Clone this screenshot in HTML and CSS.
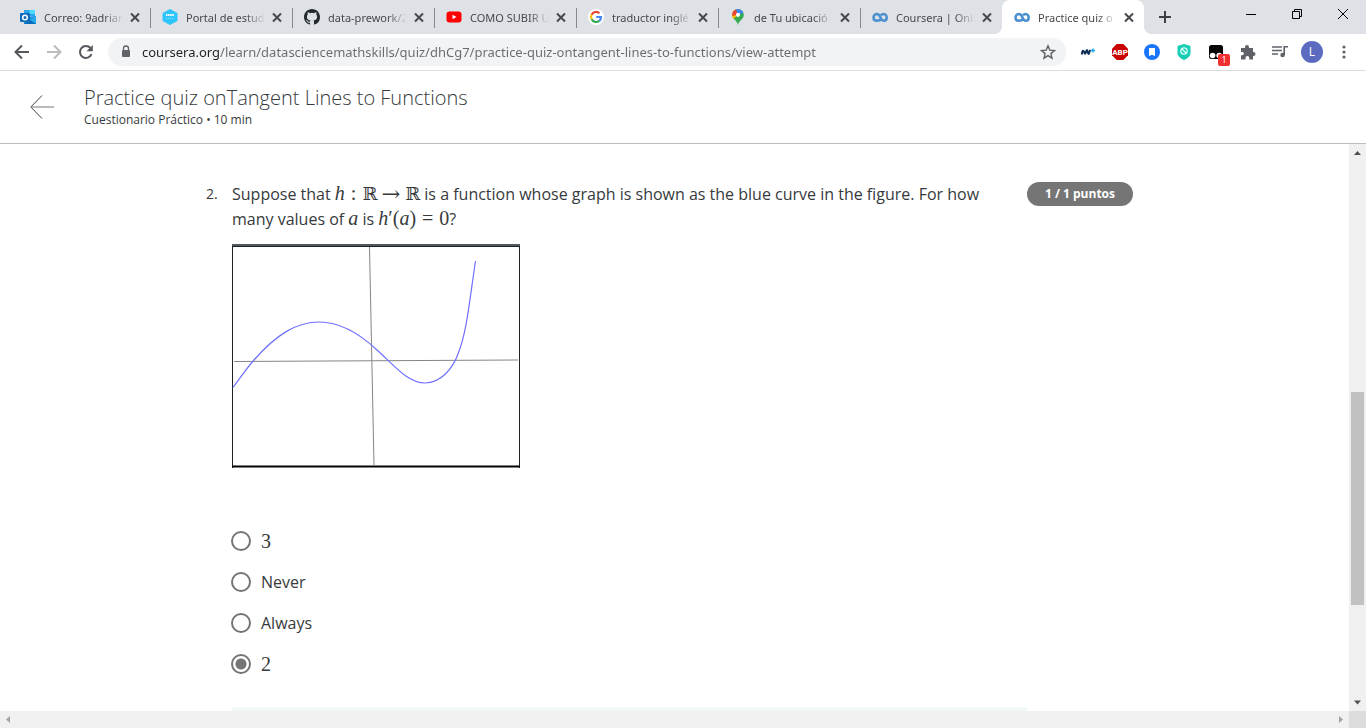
FILE: index.html
```html
<!DOCTYPE html>
<html lang="es">
<head>
<meta charset="utf-8">
<title>Practice quiz onTangent Lines to Functions</title>
<link rel="stylesheet" href="styles.css">
</head>
<body>
<svg class="defs" aria-hidden="true">
  <symbol id="close" viewBox="0 0 16 16"><path d="M4 4.500 12 12.500M12 4.500 4 12.500" stroke="#45484c" stroke-width="2"/></symbol>
  <symbol id="coursera" viewBox="0 0 16 16"><path d="M9.300 9.800C8.400 11.200 7.300 11.800 5 11.800 2.500 11.800 1.500 10 1.500 8.400S2.800 5 5.200 5C8.600 5 8.200 11.800 11.800 11.800 13.800 11.800 14.700 10 14.700 8.400S13.600 5 11.500 5C10.300 5 9.500 5.600 9 6.400" fill="none" stroke="#4a90d0" stroke-width="2.500"/></symbol>
</svg>

<header class="tabstrip">
  <nav class="tabs" aria-label="Tabs">
    <div class="tab">
      <svg class="favicon" viewBox="0 0 16 16"><path d="M4 1h11v6H4z" fill="#28a8ea"/><path d="M9.500 1H15v4H9.500z" fill="#50d9ff"/><path d="M4 5h6v5H4z" fill="#0364b8"/><path d="M4 8l12-1v8H4z" fill="#1490df"/><path d="M16 7v8L9 11z" fill="#28a8ea"/><path d="M4 15l6-4 6 4z" fill="#0a6cbd"/><rect y="4" width="10" height="9" rx="1" fill="#0f6cbd"/><circle cx="5" cy="8.500" r="2.300" fill="none" stroke="#fff" stroke-width="1.500"/></svg>
      <span class="title">Correo: 9adriar</span><button class="close" aria-label="Cerrar"><svg><use href="#close"/></svg></button>
    </div>
    <div class="tab">
      <svg class="favicon" viewBox="0 0 16 16"><path d="M8 .500 15 4.300v7.400L8 15.500 1 11.700V4.300z" fill="#2dc5fa" stroke="#2dc5fa" stroke-linejoin="round"/><path d="M4 6h8" stroke="#fff" stroke-width="2" stroke-dasharray="1.500 .6"/><path d="M4 9.500h8" stroke="#8ce2ff" stroke-dasharray="1 1"/></svg>
      <span class="title">Portal de estud</span><button class="close" aria-label="Cerrar"><svg><use href="#close"/></svg></button>
    </div>
    <div class="tab">
      <svg class="favicon" viewBox="0 0 16 16"><path fill="#24292e" d="M8 0C3.580 0 0 3.580 0 8c0 3.540 2.290 6.530 5.470 7.590.4.070.55-.17.55-.38 0-.19-.010-.82-.010-1.490-2.010.37-2.530-.49-2.690-.94-.09-.23-.48-.94-.82-1.130-.28-.15-.68-.52-.010-.53.63-.010 1.080.58 1.230.82.72 1.210 1.870.87 2.330.66.070-.52.28-.87.510-1.070-1.780-.2-3.640-.89-3.640-3.950 0-.87.310-1.590.82-2.150-.08-.2-.36-1.020.08-2.120 0 0 .67-.21 2.200.82a7.600 7.600 0 0 1 4 0c1.530-1.040 2.200-.82 2.200-.82.44 1.100.16 1.920.08 2.120.51.56.82 1.270.82 2.150 0 3.070-1.870 3.750-3.650 3.950.29.25.54.73.54 1.480 0 1.070-.010 1.930-.010 2.200 0 .21.15.46.55.38A8 8 0 0 0 16 8c0-4.420-3.580-8-8-8z"/></svg>
      <span class="title">data-prework/2</span><button class="close" aria-label="Cerrar"><svg><use href="#close"/></svg></button>
    </div>
    <div class="tab">
      <svg class="favicon" viewBox="0 0 16 16"><rect x=".5" y="2.500" width="15" height="11" rx="3" fill="#f00"/><path d="M6.500 5.700v4.600L10.500 8z" fill="#fff"/></svg>
      <span class="title">COMO SUBIR U</span><button class="close" aria-label="Cerrar"><svg><use href="#close"/></svg></button>
    </div>
    <div class="tab">
      <svg class="favicon" viewBox="0 0 16 16"><circle cx="8" cy="8" r="8" fill="#fff"/><g fill="none" stroke-width="2.200"><path d="M11.500 4.300A5 5 0 0 0 3.600 5.700" stroke="#ea4335"/><path d="M3.600 5.700a5 5 0 0 0 0 4.600" stroke="#fbbc05"/><path d="M3.600 10.300a5 5 0 0 0 7.700 1.500" stroke="#34a853"/><path d="M11.300 11.800A5 5 0 0 0 13 8H8.200" stroke="#4285f4"/></g></svg>
      <span class="title">traductor inglé</span><button class="close" aria-label="Cerrar"><svg><use href="#close"/></svg></button>
    </div>
    <div class="tab">
      <svg class="favicon" viewBox="0 0 16 16"><path d="M8 0a5.800 5.800 0 0 0-5.800 5.800C2.200 10.500 7 11 8 16c1-5 5.800-5.500 5.800-10.200A5.800 5.800 0 0 0 8 0z" fill="#34a853"/><path d="M8 5.800 3.500 10A6 6 0 0 1 3.700 2z" fill="#fbbc04"/><path d="M8 5.800 2.400 7A5.800 5.800 0 0 1 6 .4z" fill="#ea4335"/><path d="M6 .4A5.800 5.800 0 0 1 13.400 4L8 6z" fill="#4285f4"/><circle cx="8" cy="5.800" r="2.100" fill="#fff"/></svg>
      <span class="title">de Tu ubicació</span><button class="close" aria-label="Cerrar"><svg><use href="#close"/></svg></button>
    </div>
    <div class="tab">
      <svg class="favicon"><use href="#coursera"/></svg>
      <span class="title">Coursera | Onli</span><button class="close" aria-label="Cerrar"><svg><use href="#close"/></svg></button>
    </div>
    <div class="tab active">
      <svg class="favicon"><use href="#coursera"/></svg>
      <span class="title">Practice quiz o</span><button class="close" aria-label="Cerrar"><svg><use href="#close"/></svg></button>
    </div>
  </nav>
  <button class="newtab" aria-label="Nueva pestaña"><svg width="12" height="12" viewBox="0 0 12 12"><path d="M6 0v12M0 6h12" stroke="#3c4043" stroke-width="2"/></svg></button>
  <div class="window">
    <button aria-label="Minimizar"><svg width="12" height="12"><path d="M1 6.500h10" stroke="#000"/></svg></button>
    <button aria-label="Restaurar"><svg width="12" height="12" fill="none" stroke="#000"><path d="M1.500 3.500h7v7h-7zM3.500 3.500v-2h7v7h-2"/></svg></button>
    <button aria-label="Cerrar ventana"><svg width="12" height="12"><path d="M1 1l10 10M11 1 1 11" stroke="#000"/></svg></button>
  </div>
</header>

<div class="toolbar">
  <button aria-label="Atrás"><svg width="16" height="16" fill="none" stroke="#55585c" stroke-width="2"><path d="M15 8H2M8 1.500 1.500 8 8 14.500"/></svg></button>
  <button aria-label="Adelante"><svg width="16" height="16" fill="none" stroke="#babcbe" stroke-width="2"><path d="M1 8h13M8 1.500 14.500 8 8 14.500"/></svg></button>
  <button aria-label="Recargar"><svg width="16" height="16"><path d="M13.500 10.200A6 6 0 1 1 12.500 4" fill="none" stroke="#55585c" stroke-width="2"/><path d="M14.800 1v6.300H8.500z" fill="#55585c"/></svg></button>
  <div class="omnibox">
    <svg width="10" height="14"><path d="M2.500 6V3.500a2.500 2.500 0 0 1 5 0V6" fill="none" stroke="#5f6368" stroke-width="1.300"/><rect x="1" y="5" width="8" height="7" rx="1" fill="#5f6368"/></svg>
    <input class="url" type="text" aria-label="Dirección" value="coursera.org/learn/datasciencemathskills/quiz/dhCg7/practice-quiz-ontangent-lines-to-functions/view-attempt">
    <button aria-label="Favorito"><svg width="16" height="16"><path d="M8 1.800l1.800 4.300 4.700.4-3.600 3.100 1.100 4.600-4-2.500-4 2.500 1.100-4.600L1.500 6.500l4.700-.4z" fill="none" stroke="#5f6368" stroke-width="1.400"/></svg></button>
  </div>
  <div class="extensions">
    <button aria-label="Movistar"><svg width="16" height="16"><path d="M2 10.500c0-4 1.200-5 2.500-1.500 1 2.500 1.500-3 2.500-3s.5 4 1.500 4S9 7 10.500 6" fill="none" stroke="#0b2d55" stroke-width="2"/><path d="M13 4.500v4M11 6.500h4" stroke="#12a6e0" stroke-width="1.300"/></svg></button>
    <button aria-label="AdBlock"><svg width="16" height="16"><path d="M4.700 0h6.600L16 4.700v6.600L11.300 16H4.700L0 11.300V4.700z" fill="#c70000"/><text class="abp" x="8" y="11" text-anchor="middle">ABP</text></svg></button>
    <button aria-label="Marcador"><svg width="16" height="16"><circle cx="8" cy="8" r="8" fill="#1a75fa"/><path d="M5 4h6v8L8 10.800 5 12z" fill="#fff"/></svg></button>
    <button aria-label="Protección"><svg width="16" height="16"><path d="M8 0l6.500 2v7c0 3-3 5.500-6.500 7C4.500 14.500 1.500 12 1.500 9V2z" fill="#18cdb4"/><circle cx="8" cy="7" r="3.200" fill="none" stroke="#d8fff8" stroke-width="1.300"/><path d="M5.800 4.800l4.400 4.400" stroke="#d8fff8" stroke-width="1.300"/></svg></button>
    <button class="badged" aria-label="Tampermonkey"><svg width="16" height="16"><rect x="1" y="1" width="14" height="14" rx="2.500" fill="#050505"/><circle cx="4.600" cy="11.500" r="2.800" fill="#fff"/><circle cx="11.200" cy="11.500" r="2.800" fill="#fff"/></svg><span class="badge">1</span></button>
    <button aria-label="Extensiones"><svg width="16" height="16"><path d="M1 4h4V3a2 2 0 0 1 4 0v1h4v4h.5a2 2 0 0 1 0 4H13v3.500H9.300V14a1.900 1.900 0 0 0-3.800 0v1.500H1v-4.200h1.200a1.700 1.700 0 0 0 0-3.400H1z" fill="#5f6368"/></svg></button>
    <button aria-label="Medios"><svg width="16" height="16"><path d="M0 3h10M0 6.500h10M0 10h6" stroke="#5f6368" stroke-width="1.600"/><path d="M12.200 11V2.800H16" fill="none" stroke="#5f6368" stroke-width="1.600"/><circle cx="10.600" cy="11" r="2.300" fill="#5f6368"/></svg></button>
    <button aria-label="Perfil"><span class="avatar">L</span></button>
    <button aria-label="Menú"><svg width="4" height="16" fill="#5f6368"><circle cx="2" cy="3" r="1.600"/><circle cx="2" cy="8" r="1.600"/><circle cx="2" cy="13" r="1.600"/></svg></button>
  </div>
</div>

<div class="quizbar">
  <button class="back" aria-label="Volver"><svg width="24" height="24" fill="none" stroke="#3a3d41"><path d="M12 .500.800 12 12 23.500"/><path d="M1 12h23" stroke="#777"/></svg></button>
  <div>
    <h1>Practice quiz onTangent Lines to Functions</h1>
    <p>Cuestionario Práctico • 10 min</p>
  </div>
</div>

<div class="viewport">
  <main class="page">
    <section class="question">
      <span class="number">2.</span>
      <div class="body">
        <p class="prompt" id="prompt">Suppose that <span class="math"><i>h</i><span class="rel">:</span><span class="bb">ℝ</span><span class="arrow">→</span><span class="bb">ℝ</span></span> is a function whose graph is shown as the blue curve in the figure. For how many values of <span class="math"><i>a</i></span> is <span class="math"><i>h</i>′(<i>a</i>)<span class="rel">=</span>0</span>?</p>
        <svg class="graph" viewBox="0 0 288 224" role="img" aria-label="Graph of h">
          <rect width="288" height="224" fill="#fff"/>
          <path d="M.500 0v224M287.500 0v224" stroke="#1f2326"/>
          <path d="M0 1h288" stroke="#50585c" stroke-width="2"/><path d="M0 2.500h288" stroke="#1d2529"/>
          <path d="M0 222.500h288" stroke="#000" stroke-width="2"/>
          <path d="M2 117.500 286 116M137.500 3 142 221.500" stroke="#858585"/>
          <path d="M1 143.500C9 133 14 125 22 116 44 91 64 78 87 78 109 78 128 90 145 106 160 119 175 139 193 139 209 139 221 124 226 110 235 87 237 60 243.500 17" fill="none" stroke="#7070ff" stroke-width="1.200"/>
        </svg>
        <div class="options" role="radiogroup" aria-labelledby="prompt">
          <label><input type="radio" name="answer"><span class="math">3</span></label>
          <label><input type="radio" name="answer"><span>Never</span></label>
          <label><input type="radio" name="answer"><span>Always</span></label>
          <label><input type="radio" name="answer" checked><span class="math">2</span></label>
        </div>
        <div class="feedback"></div>
      </div>
      <span class="points">1 / 1 puntos</span>
    </section>
  </main>
  <div class="vscroll" aria-hidden="true">
    <svg width="17" height="17" fill="#505050"><path d="M8.500 7 12 11H5z"/></svg>
    <div class="track"><div class="before"></div><div class="thumb"></div><div class="after"></div></div>
    <svg width="17" height="17" fill="#505050"><path d="M8.500 10.500 12 6.500H5z"/></svg>
  </div>
</div>
<div class="hscroll" aria-hidden="true">
  <svg width="17" height="17" fill="#a3a3a3"><path d="M6 8.500 10 5v7z"/></svg>
  <svg class="right" width="17" height="17" fill="#a3a3a3"><path d="M11 8.500 7 5v7z"/></svg>
  <div class="corner"></div>
</div>
</body>
</html>
```
FILE: styles.css
```css
* { box-sizing: border-box; }
body {
  margin: 0;
  height: 100vh;
  overflow: hidden;
  display: flex;
  flex-direction: column;
  background: #fff;
  color: #373a3c;
  font-family: "Open Sans", "Noto Sans", sans-serif;
}
h1, p { margin: 0; font-weight: 400; }
svg { flex: none; display: block; }
button {
  flex: none;
  display: flex;
  align-items: center;
  justify-content: center;
  padding: 0;
  border: 0;
  background: none;
  color: inherit;
  font: inherit;
}
.defs { position: absolute; width: 0; height: 0; }

.tabstrip { flex: none; display: flex; height: 34px; padding-left: 8px; background: #dee1e6; }
.tabs { display: flex; flex: 0 1 1136px; min-width: 0; }
.tab {
  flex: 1 1 0;
  min-width: 0;
  display: flex;
  align-items: center;
  gap: 8px;
  padding: 0 7px 0 12px;
  color: #45484c;
  font: 11px "Noto Sans", sans-serif;
  background: linear-gradient(#85888d, #85888d) 0 8px / 1px 20px no-repeat;
}
.tab:first-child { background: none; }
.tab.active {
  position: relative;
  background: #fff;
  border-radius: 8px 8px 0 0;
}
.tab.active::before, .tab.active::after {
  content: "";
  position: absolute;
  bottom: 0;
  width: 8px;
  height: 8px;
  background: radial-gradient(circle at 0 0, #dee1e6 8px, #fff 8px);
}
.tab.active::before { right: 100%; }
.tab.active::after { left: 100%; background: radial-gradient(circle at 100% 0, #dee1e6 8px, #fff 8px); }
.favicon { width: 16px; height: 16px; }
.title {
  flex: 1;
  min-width: 0;
  margin-right: -4px;
  overflow: hidden;
  white-space: nowrap;
  mask-image: linear-gradient(to right, #000 75%, transparent);
}
.close, .close svg { width: 16px; height: 16px; }
.newtab { width: 28px; margin-left: 7px; }
.window { display: flex; margin-left: auto; height: 28px; }
.window button { width: 46px; }

.toolbar {
  flex: none;
  display: flex;
  align-items: center;
  height: 37px;
  padding: 0 6px;
  border-bottom: 1px solid #dadce0;
}
.toolbar button { width: 32px; height: 28px; }
.omnibox {
  flex: 1;
  min-width: 0;
  display: flex;
  align-items: center;
  height: 28px;
  margin: 0 6px;
  padding: 0 2px 0 13px;
  border-radius: 14px;
  background: #f1f3f4;
}
.url {
  flex: 1;
  min-width: 0;
  margin-left: 11px;
  padding: 0;
  border: 0;
  outline: 0;
  height: 24px;
  font: 13px "Noto Sans", sans-serif;
  color: transparent;
  background: linear-gradient(to right, #202124 77px, #676b70 77px);
  background-clip: text;
}
.extensions { display: flex; }
.abp { font: bold 8px Roboto, sans-serif; fill: #fff; }
.badged { position: relative; }
.badge {
  position: absolute;
  left: 18px;
  top: 16px;
  width: 12px;
  height: 12px;
  border-radius: 2px;
  background: #ee3030;
  color: #fff;
  font-size: 9px;
  line-height: 12px;
}
.avatar {
  width: 22px;
  height: 22px;
  border-radius: 50%;
  background: #5c6bc0;
  color: #fff;
  font-size: 12px;
  line-height: 22px;
}

.quizbar {
  flex: none;
  display: flex;
  align-items: center;
  height: 73px;
  padding-left: 30px;
  border-bottom: 1px solid #bdbdbd;
}
.back { width: 24px; height: 24px; margin-right: 30px; }
.quizbar h1 { font-size: 20px; font-weight: 300; line-height: 26px; }
.quizbar p { font-size: 12px; line-height: 18px; }

.viewport { flex: 1; min-height: 0; display: flex; }
.page { flex: 1; min-width: 0; overflow: hidden; }
.question {
  display: flex;
  align-items: flex-start;
  max-width: 937px;
  margin: 0 auto;
  padding: 38px 10px 0 0;
}
.number { flex: none; width: 26px; font-size: 14px; line-height: 23px; }
.body { flex: 1; min-width: 0; }
.prompt { padding-right: 32px; font-size: 16px; line-height: 25px; }
.math { font: 20px/1 "Liberation Serif", serif; white-space: nowrap; }
.rel { margin: 0 6px; }
.bb { font: 18px/1 "DejaVu Serif", "DejaVu Sans", serif; }
.arrow { margin: 0 4px; font: 20px/1 "DejaVu Math TeX Gyre", "DejaVu Serif", serif; }
.graph { width: 288px; height: 224px; margin-top: 12px; }
.options { margin-top: 52px; }
.options label { display: flex; align-items: center; height: 41px; font-size: 16px; }
.options input {
  appearance: none;
  flex: none;
  width: 20px;
  height: 20px;
  margin: 0 10px 0 -1px;
  border: 2px solid #757575;
  border-radius: 50%;
  background: #fff;
}
.options input:checked { background: radial-gradient(circle, #757575 5px, #fff 6px); }
.feedback { height: 120px; margin-top: 23px; background: #f1f9f7; }
.points {
  flex: none;
  width: 106px;
  border-radius: 12px;
  background: #757575;
  color: #fff;
  font-size: 12px;
  font-weight: 700;
  line-height: 24px;
  text-align: center;
}

.vscroll { flex: none; display: flex; flex-direction: column; background: #f0f0f0; }
.track { flex: 1; display: flex; flex-direction: column; padding: 0 2px; }
.before { flex: 231; }
.thumb { flex: 213; background: #c1c1c1; }
.after { flex: 89; }
.hscroll { flex: none; display: flex; height: 17px; background: #f0f0f0; }
.right { margin-left: auto; }
.corner { width: 17px; background: #dcdcdc; }
```
